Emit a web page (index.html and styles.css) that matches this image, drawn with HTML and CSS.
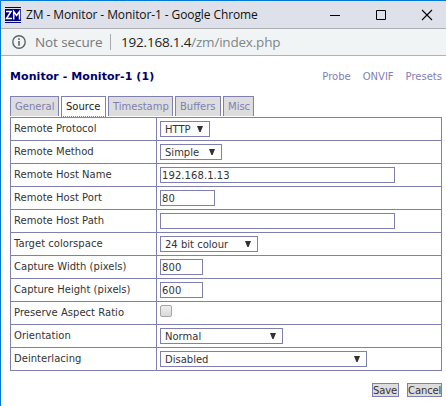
FILE: index.html
```
<!DOCTYPE html>
<html lang="en">
<head>
<meta charset="utf-8">
<title>ZM - Monitor - Monitor-1</title>
<link rel="stylesheet" href="styles.css">
</head>
<body>
<div class="window">
  <div class="titlebar">
    <svg class="logo" width="16" height="16" viewBox="0 0 16 16"><path fill="#00007c" d="M0 0h16v1H0zM0 2h16v12H0zM0 15h16v1H0z"/><path fill="none" stroke="#fff" stroke-width="1.500" d="M1 4.500h5L1.500 11.500H7M8.700 12.500V4.500l2.900 4 2.900-4v8"/></svg>
    <span class="caption">ZM - Monitor - Monitor-1 - Google Chrome</span>
    <svg class="controls" width="104" height="12" viewBox="0 0 104 12"><path fill="none" stroke="#000" d="M0 6.500h10M46.500 1.500h9v9h-9z"/><path fill="none" stroke="#000" stroke-width="1.100" d="M92 1l10 10M102 1L92 11"/></svg>
  </div>
  <div class="address">
    <svg class="info" width="14" height="14" viewBox="0 0 14 14"><circle cx="7" cy="7" r="6.200" fill="none" stroke="#5f6368" stroke-width="1.400"/><path fill="#5f6368" d="M6.200 3.300h1.600v1.600H6.200zM6.200 6h1.600v4.700H6.200z"/></svg>
    <span class="insecure">Not secure</span>
    <span class="divider"></span>
    <span class="url"><span class="host">192.168.1.4</span>/zm/index.php</span>
  </div>
  <div class="page">
    <div class="header">
      <h2>Monitor - Monitor-1 (1)</h2>
      <div class="links"><a>Probe</a><a>ONVIF</a><a>Presets</a></div>
    </div>
    <div class="tabs">
      <span class="tab general">General</span><span class="tab source active">Source</span><span class="tab timestamp">Timestamp</span><span class="tab buffers">Buffers</span><span class="tab misc">Misc</span>
    </div>
    <div class="settings">
      <div class="row"><div class="label">Remote Protocol</div><div class="value"><div class="select w-protocol">HTTP<i></i></div></div></div>
      <div class="row"><div class="label">Remote Method</div><div class="value"><div class="select w-method">Simple<i></i></div></div></div>
      <div class="row"><div class="label">Remote Host Name</div><div class="value"><div class="input w-host">192.168.1.13</div></div></div>
      <div class="row"><div class="label">Remote Host Port</div><div class="value"><div class="input w-port">80</div></div></div>
      <div class="row"><div class="label">Remote Host Path</div><div class="value"><div class="input w-host"></div></div></div>
      <div class="row"><div class="label">Target colorspace</div><div class="value"><div class="select w-color">24 bit colour<i></i></div></div></div>
      <div class="row"><div class="label">Capture Width (pixels)</div><div class="value"><div class="input w-size">800</div></div></div>
      <div class="row"><div class="label">Capture Height (pixels)</div><div class="value"><div class="input w-size">600</div></div></div>
      <div class="row"><div class="label">Preserve Aspect Ratio</div><div class="value"><div class="checkbox"></div></div></div>
      <div class="row"><div class="label">Orientation</div><div class="value"><div class="select w-orient">Normal<i></i></div></div></div>
      <div class="row"><div class="label">Deinterlacing</div><div class="value"><div class="select w-deint">Disabled<i></i></div></div></div>
    </div>
    <div class="buttons"><span class="button save">Save</span><span class="button cancel">Cancel</span></div>
  </div>
</div>
</body>
</html>
```
FILE: styles.css
```
* { box-sizing: border-box; }
body { margin: 0; background: #fff; overflow: hidden; }
.window {
  width: 446px; height: 406px;
  border-top: 1px solid #0078d7; border-left: 1px solid #0078d7;
  font-family: "DejaVu Sans", Verdana, sans-serif;
  font-size: 10px; color: #333; white-space: nowrap;
}
.titlebar {
  display: flex; align-items: center; height: 28px; padding: 0 12px 0 4px;
  background: #dee1e9; border-bottom: 1px solid #adafb3;
  font-family: "Open Sans", "Noto Sans", sans-serif; font-size: 12px; color: #111;
}
.caption { margin-left: 5px; letter-spacing: -0.1px; }
.controls { margin-left: auto; }
.address {
  display: flex; align-items: center; height: 27px; padding-left: 11px;
  background: #f0f4f5; border-bottom: 1px solid #b0b2b3;
  font-family: "Open Sans", "Noto Sans", sans-serif; font-size: 13.5px; color: #80868b;
}
.insecure { width: 67px; margin-left: 9px; color: #74787c; letter-spacing: -0.1px; }
.divider { width: 1px; height: 16px; margin: 0 10px 0 8px; background: #a8abad; }
.url { letter-spacing: -0.2px; }
.host { color: #222; }
.page { padding: 13px 4px 0 9px; }
.header { display: flex; justify-content: space-between; height: 27px; line-height: 15px; }
h2 { margin: 0; font-size: 11px; line-height: 15px; color: #000068; letter-spacing: 0.07px; }
.links { display: flex; gap: 12px; color: #7f7fb2; }
.tabs { display: flex; gap: 2px; height: 21px; }
.tab {
  height: 20px; padding-left: 4px; line-height: 20px;
  border: 1px solid #7f7fb2; border-bottom: 0; background: #ddd; color: #7f7fb2;
}
.tab.active { height: 21px; background: #fff; color: #222; border-bottom: 1px dotted #7f7fb2; }
.general { width: 49px; }
.source { width: 45px; }
.timestamp { width: 65px; }
.buffers { width: 46px; }
.misc { width: 31px; }
.settings { border: 1px solid #7f7fb2; border-bottom: 0; }
.row { display: flex; height: 23px; border-bottom: 1px solid #7f7fb2; }
.label { width: 146px; padding-left: 3px; line-height: 22px; border-right: 1px solid #7f7fb2; letter-spacing: 0.03px; }
.value { padding: 3px 0 0 3px; }
.select, .input { height: 16px; border: 1px solid #7f7fb2; line-height: 15px; }
.select { display: flex; justify-content: space-between; padding: 0 6px 0 4px; }
.select i { width: 6px; height: 6px; margin-top: 4px; background: #333; clip-path: polygon(0 0, 100% 0, 60% 100%, 40% 100%); }
.input { padding-left: 1px; letter-spacing: 0.08px; }
.w-protocol { width: 50px; }
.w-method { width: 62px; }
.w-host { width: 235px; }
.w-port { width: 55px; }
.w-color { width: 98px; }
.w-size { width: 43px; }
.w-orient { width: 123px; }
.w-deint { width: 207px; }
.checkbox {
  width: 12px; height: 12px; border: 1px solid #a5a5a5; border-radius: 2px;
  background: linear-gradient(#eee, #dadada);
}
.buttons { display: flex; justify-content: flex-end; gap: 8px; margin-top: 12px; }
.button { height: 14px; line-height: 14px; border: 1px solid #7f7fb2; background: #ddd; letter-spacing: -0.1px; }
.save { width: 27px; }
.cancel { width: 35px; }
```
